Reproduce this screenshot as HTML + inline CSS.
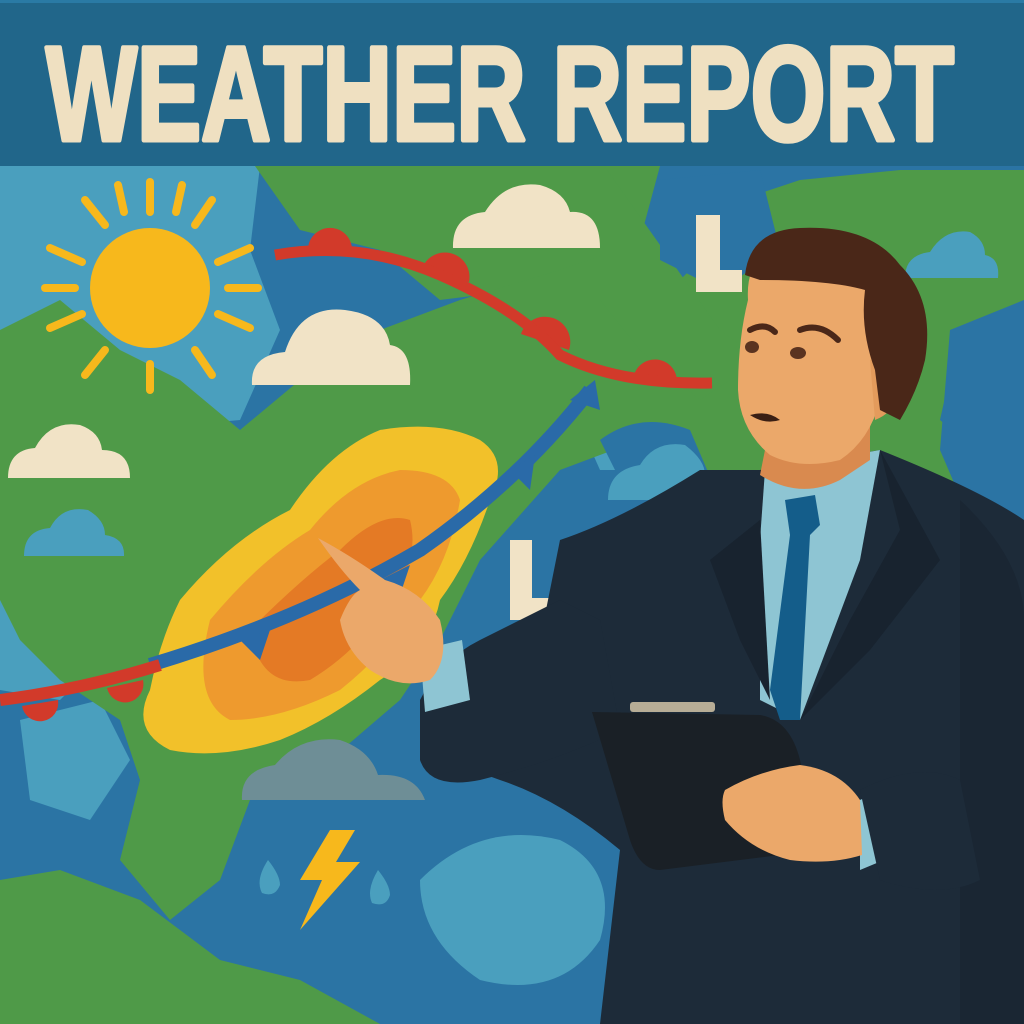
<!DOCTYPE html>
<html><head><meta charset="utf-8"><style>
html,body{margin:0;padding:0;width:1024px;height:1024px;overflow:hidden;background:#2b74a4}
svg{display:block}
</style></head><body>
<svg width="1024" height="1024" viewBox="0 0 1024 1024" xmlns="http://www.w3.org/2000/svg">
<rect x="0" y="166" width="1024" height="858" fill="#2b74a4"/>
<path d="M0 166 H260 L250 250 L280 330 L240 420 L130 430 L0 400 Z" fill="#4a9fbe"/>
<path d="M0 560 L60 520 L160 500 L240 540 L200 620 L120 640 L60 700 L0 690 Z" fill="#4a9fbe"/>
<path d="M20 720 L100 700 L130 760 L90 820 L30 800 Z" fill="#4a9fbe"/>
<path d="M420 880 Q480 820 560 840 Q620 870 600 940 Q560 1000 480 980 Q420 940 420 880 Z" fill="#4a9fbe"/>
<path d="M560 380 L640 350 L700 400 L680 470 L600 470 Z" fill="#4a9fbe"/>
<path d="M255 166 H660 L640 240 L600 300 L520 290 L440 300 L380 250 L300 230 Z" fill="#4f9a48"/>
<path d="M0 330 L60 300 L120 350 L180 380 L240 430 L300 380 L380 330 L460 300 L560 270 L620 250 L660 300 L700 260 L740 200 L800 180 L900 170 L1024 170 L1024 300 L960 330 L940 420 L1000 470 L980 520 L900 540 L800 560 L700 480 L640 440 L560 470 L480 560 L440 640 L400 700 L330 760 L250 800 L220 880 L170 920 L120 860 L140 780 L120 720 L60 680 L20 640 L0 600 Z" fill="#4f9a48"/>
<path d="M0 880 L60 870 L140 900 L220 960 L300 980 L380 1024 H0 Z" fill="#4f9a48"/>
<path d="M600 160 L720 330 L760 360 L700 400 L640 350 L600 300 Z" fill="#4f9a48"/>
<path d="M660 180 L760 170 L780 250 L720 290 L660 260 Z" fill="#2b74a4"/>
<path d="M950 330 L1024 300 V560 L970 520 L940 450 Z" fill="#2b74a4"/>
<path d="M600 440 Q640 410 690 430 L720 500 L640 520 Z" fill="#2b74a4"/>
<path d="M180 600 Q230 540 290 510 Q330 450 380 430 Q440 420 480 440 Q510 460 490 500 Q470 560 440 600 Q430 650 380 680 Q330 720 280 740 Q220 760 170 750 Q130 730 150 690 Q160 640 180 600 Z" fill="#f2c12a"/>
<path d="M210 620 Q260 560 310 530 Q350 480 400 470 Q450 470 460 500 Q450 560 420 600 Q390 650 340 690 Q280 720 230 720 Q190 700 210 620 Z" fill="#ee9a2e"/>
<path d="M250 630 Q300 580 340 550 Q380 510 410 520 Q420 560 390 600 Q360 650 310 680 Q260 690 250 630 Z" fill="#e47a25"/>
<path d="M150 665 Q300 620 420 550 Q520 480 590 390" stroke="#2a6aa8" stroke-width="14" fill="none"/>
<path d="M240 640 L260 660 L270 630 Z M380 580 L400 595 L410 565 Z M510 470 L530 490 L535 455 Z M570 400 L600 410 L595 380 Z" fill="#2a6aa8"/>
<path d="M0 700 Q80 690 160 665" stroke="#d23a2a" stroke-width="12" fill="none"/>
<g fill="#d23a2a">
<path d="M22 706 A18 18 0 0 0 58 700 Z"/>
<path d="M107 688 A18 18 0 0 0 143 680 Z"/>
<path d="M308 252 A22 22 0 0 1 352 248 Z"/>
<path d="M421 272 A24 24 0 0 1 469 282 Z"/>
<path d="M521 334 A24 24 0 0 1 569 350 Z"/>
<path d="M633 380 A22 22 0 0 1 677 383 Z"/>
</g>
<path d="M275 255 Q360 240 440 275 Q520 310 560 355 Q620 385 712 383" stroke="#d23a2a" stroke-width="11" fill="none"/>
<circle cx="150" cy="288" r="60" fill="#f7b81c"/>
<g stroke="#f7b81c" stroke-width="8" stroke-linecap="round">
<line x1="150" y1="182" x2="150" y2="212"/><line x1="150" y1="364" x2="150" y2="390"/>
<line x1="45" y1="288" x2="75" y2="288"/><line x1="228" y1="288" x2="258" y2="288"/>
<line x1="85" y1="200" x2="105" y2="225"/><line x1="195" y1="225" x2="212" y2="200"/>
<line x1="85" y1="375" x2="105" y2="350"/><line x1="195" y1="350" x2="212" y2="375"/>
<line x1="50" y1="248" x2="82" y2="262"/><line x1="218" y1="262" x2="250" y2="248"/>
<line x1="50" y1="328" x2="82" y2="314"/><line x1="218" y1="314" x2="250" y2="328"/>
<line x1="118" y1="185" x2="124" y2="212"/><line x1="176" y1="212" x2="182" y2="185"/>
</g>
<g fill="#f1e3c6">
<path d="M252 385 Q250 355 285 352 Q300 305 345 310 Q385 315 390 345 Q412 348 410 385 Z"/>
<path d="M453 248 Q452 215 485 212 Q505 180 540 185 Q565 192 570 212 Q600 210 600 248 Z"/>
<path d="M8 478 Q8 450 35 448 Q50 420 80 425 Q100 432 102 450 Q130 450 130 478 Z"/>
<path d="M696 292 L696 215 L720 215 L720 270 L742 270 L742 292 Z"/>
<path d="M510 620 L510 540 L532 540 L532 598 L562 598 L562 620 Z"/>
</g>
<g fill="#4a9fbe">
<path d="M905 278 Q905 255 930 252 Q945 228 970 232 Q985 240 985 255 Q1000 258 998 278 Z"/>
<path d="M608 500 Q608 470 640 465 Q655 440 685 445 Q705 460 705 475 Q722 478 720 500 Z"/>
<path d="M24 556 Q24 530 50 528 Q62 505 88 510 Q105 520 105 535 Q125 538 124 556 Z"/>
</g>
<path d="M242 800 Q240 770 275 765 Q300 735 340 740 Q370 750 378 775 Q415 773 425 800 Z" fill="#6e8e96"/>
<path d="M330 830 L300 880 L322 880 L300 930 L360 862 L336 862 L355 830 Z" fill="#f7b81c"/>
<path d="M268 860 Q255 880 262 893 Q275 898 280 885 Q280 875 268 860 Z M378 870 Q366 890 372 903 Q386 908 390 895 Q390 885 378 870 Z" fill="#4a9fbe"/>
<rect x="0" y="0" width="1024" height="166" fill="#21668a"/>
<rect x="0" y="0" width="1024" height="3" fill="#2a7aa5"/>
<text x="46" y="140" textLength="908" lengthAdjust="spacingAndGlyphs" font-family="Liberation Sans, sans-serif" font-weight="bold" font-size="134" fill="#efe0c1" stroke="#efe0c1" stroke-width="5" stroke-linejoin="round">WEATHER REPORT</text>
<path d="M560 540 Q620 520 700 470 L760 470 L880 450 Q980 490 1024 520 V1024 H600 L620 850 Q560 800 500 780 Q440 760 420 720 L425 680 Q480 660 540 640 Z" fill="#1d2b39"/>
<path d="M960 500 Q1024 560 1024 620 V1024 H960 Z" fill="#1a2633"/>
<path d="M765 470 L880 450 L860 560 L800 720 L760 700 L760 540 Z" fill="#8ec5d3"/>
<path d="M785 500 L815 495 L820 525 L810 535 L800 720 L780 720 L770 690 L790 535 Z" fill="#145d8a"/>
<path d="M760 520 L710 560 L740 640 L770 700 Z" fill="#18232f"/>
<path d="M880 450 L900 530 L850 620 L800 720 L870 650 L940 560 Z" fill="#18232f"/>
<path d="M765 450 L760 475 Q800 500 840 480 L870 460 L870 410 L780 420 Z" fill="#d98a4f"/>
<path d="M748 300 Q745 250 790 245 Q850 245 875 290 L880 400 Q870 440 840 460 Q800 470 770 455 Q740 430 738 390 Q738 340 748 300 Z" fill="#eba86a"/>
<path d="M870 360 Q900 350 902 380 Q900 410 875 420 Z" fill="#e39b5c"/>
<path d="M745 275 Q750 230 800 228 Q870 225 900 265 Q935 300 925 360 Q918 390 900 420 L880 410 L875 370 Q860 330 865 290 Q830 280 760 280 Z" fill="#4a2718"/>
<path d="M750 330 Q765 322 775 332 M800 330 Q820 322 838 340" stroke="#4a2718" stroke-width="6" fill="none" stroke-linecap="round"/>
<ellipse cx="752" cy="347" rx="7" ry="6" fill="#5a3320"/><ellipse cx="798" cy="353" rx="8" ry="6" fill="#5a3320"/>
<path d="M750 415 Q768 410 780 420 Q765 425 750 415 Z" fill="#3a1f14"/>
<path d="M420 700 Q440 660 480 640 L560 600 L600 620 L620 730 Q560 760 480 780 Q430 790 420 760 Z" fill="#1d2b39"/>
<path d="M420 650 L462 640 L470 700 L425 712 Z" fill="#8ec5d3"/>
<path d="M318 538 Q350 555 385 580 Q420 590 440 620 Q450 660 430 680 Q400 690 370 670 Q345 650 340 620 Q350 595 360 590 Q340 570 318 538 Z" fill="#eba86a"/>
<path d="M592 712 L760 715 Q790 720 800 760 L820 850 L660 870 Q640 870 630 840 Z" fill="#1a2026"/>
<rect x="630" y="702" width="85" height="10" rx="3" fill="#b7ad96"/>
<path d="M860 800 L880 790 L884 860 L860 870 Z" fill="#8ec5d3"/>
<path d="M725 790 Q760 770 800 765 Q840 770 860 800 L862 855 Q830 865 790 860 Q750 850 725 820 Q720 800 725 790 Z" fill="#eba86a"/>
<path d="M860 790 Q920 760 960 780 L980 880 Q940 900 880 880 Z" fill="#1d2b39"/>
</svg>
</body></html>
